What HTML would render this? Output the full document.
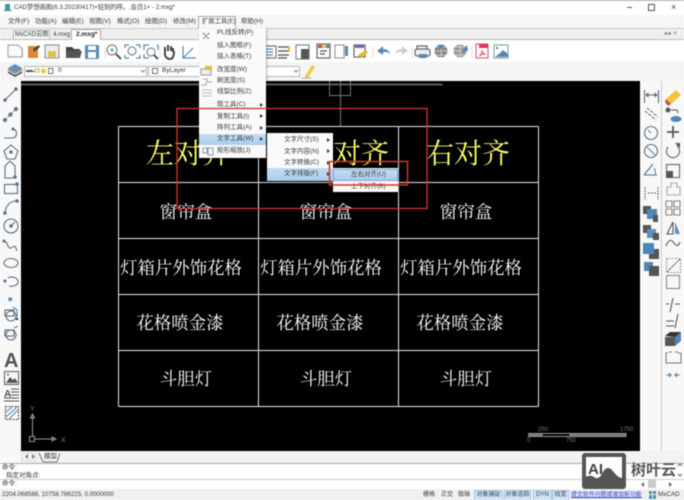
<!DOCTYPE html>
<html lang="zh"><head><meta charset="utf-8"><style>
html,body{margin:0;padding:0;width:684px;height:500px;overflow:hidden;background:#fff}
#p{position:relative;width:684px;height:500px;overflow:hidden;background:#f5f5f5;font-family:"Liberation Sans","Noto Sans CJK SC",sans-serif;color:#333;filter:blur(.5px)}
.a{position:absolute}
.t{position:absolute;white-space:nowrap;font-size:7px;line-height:10px;color:#3a3a3a}
.c{position:absolute;width:140px;text-align:center;white-space:nowrap;font-family:"Liberation Serif","Noto Serif CJK SC",serif;color:#fff;font-size:17.4px;line-height:24px}
.y{color:#ffff66;font-size:28px;line-height:40px}
.m{position:absolute;background:#fafafa;box-shadow:1px 1px 2px rgba(0,0,0,.3)}
.h{position:absolute;background:linear-gradient(#c4dcf2,#a9cdee);}
.ar{position:absolute;width:0;height:0;border-left:3px solid #333;border-top:2.5px solid transparent;border-bottom:2.5px solid transparent}
.sb{position:absolute;top:490px;height:9px;background:#cfe3f5;border:1px solid #a5c6e4;font-size:6px;line-height:9px;text-align:center;color:#345;white-space:nowrap;overflow:hidden}
</style></head><body><div id="p">
<!-- title -->
<div class="a" style="left:0;top:0;width:684px;height:15px;background:#fff;border-top:1px solid #aaa;box-sizing:border-box"></div>
<div class="t" style="left:14px;top:3px;font-size:6.3px;letter-spacing:-.05px">CAD梦想画图(6.3.20230417)+轻刻的呼。,会员1+ - 2.mxg*</div>
<div class="a" style="left:5px;top:4px;width:5px;height:7px;background:#3d9a8f"></div>
<div class="a" style="left:4px;top:10px;width:8px;height:1px;background:#3d7fb5"></div>
<div class="a" style="left:627px;top:7px;width:5px;height:1px;background:#555"></div>
<div class="a" style="left:648px;top:4px;width:5px;height:5px;border:1px solid #555"></div>
<div class="t" style="left:671px;top:2px;font-size:9px">×</div>
<!-- menubar -->
<div class="a" style="left:0;top:15px;width:684px;height:13px;background:#f6f6f6"></div>
<div class="t" style="left:8px;top:17px;font-size:6.5px">文件(F)</div>
<div class="t" style="left:35px;top:17px;font-size:6.5px">功能(A)</div>
<div class="t" style="left:62px;top:17px;font-size:6.5px">编辑(E)</div>
<div class="t" style="left:89px;top:17px;font-size:6.5px">视图(V)</div>
<div class="t" style="left:117px;top:17px;font-size:6.5px">格式(O)</div>
<div class="t" style="left:145px;top:17px;font-size:6.5px">绘图(D)</div>
<div class="t" style="left:173px;top:17px;font-size:6.5px">修改(M)</div>
<div class="a" style="left:198px;top:16px;width:38px;height:12px;background:#fafafa;border:1px solid #aaa;border-bottom:none;box-sizing:border-box"></div>
<div class="t" style="left:202px;top:17px;font-size:6.3px">扩展工具(E)</div>
<div class="t" style="left:241px;top:17px;font-size:6.5px">帮助(H)</div>
<!-- tabs -->
<div class="a" style="left:0;top:28px;width:684px;height:12px;background:#efefef;border-top:1px solid #ccc;border-bottom:1px solid #bbb;box-sizing:border-box"></div>
<div class="a" style="left:13px;top:30px;width:37px;height:10px;background:#f4f4f4;border:1px solid #bbb;box-sizing:border-box"></div>
<div class="t" style="left:15px;top:30px;font-size:6.1px">MxCAD云图</div>
<div class="t" style="left:53px;top:30px;font-size:6.3px">4.mxg</div>
<div class="a" style="left:71px;top:29px;width:30px;height:12px;background:#fff;border:1px solid #aaa;border-bottom:none;box-sizing:border-box"></div>
<div class="t" style="left:76px;top:30px;font-size:6.5px;font-weight:bold;color:#222">2.mxg*</div>
<div class="t" style="left:664px;top:29px;font-size:6px;color:#666">◂ ▸ ×</div>
<!-- toolbar bg -->
<div class="a" style="left:0;top:40px;width:684px;height:41px;background:#fff"></div>
<div class="a" style="left:0;top:62px;width:684px;height:20px;background:#f4f4f4"></div>
<!-- combos -->
<div class="a" style="left:24px;top:66px;width:123px;height:11px;background:#fff;border:1px solid #b5b5b5;box-sizing:border-box"></div>
<div class="a" style="left:148px;top:66px;width:152px;height:11px;background:#fff;border:1px solid #b5b5b5;box-sizing:border-box"></div>
<div class="t" style="left:58px;top:66px;font-size:6.5px">0</div>
<div class="t" style="left:162px;top:66px;font-size:6.5px">ByLayer</div>
<!-- side panels -->
<div class="a" style="left:0;top:81px;width:21px;height:382px;background:#f8f8f8"></div>
<div class="a" style="left:640px;top:81px;width:44px;height:382px;background:#f8f8f8"></div>
<div class="a" style="left:661px;top:81px;width:1px;height:382px;background:#ccc"></div>
<!-- canvas -->
<div class="a" style="left:21px;top:81px;width:619px;height:370px;background:#000"></div>
<!-- model tab & command -->
<div class="a" style="left:21px;top:451px;width:663px;height:12px;background:#f2f2f2"></div>
<div class="t" style="left:44px;top:452px;font-size:6.5px">模型</div>
<div class="a" style="left:0;top:463px;width:684px;height:27px;background:#fff;border-top:1px solid #aaa;box-sizing:border-box"></div>
<div class="a" style="left:0;top:479px;width:684px;height:1px;background:#ccc"></div>
<div class="t" style="left:2px;top:463px;font-size:6.5px">命令:</div>
<div class="t" style="left:6px;top:471px;font-size:6.5px">指定对角点:</div>
<div class="t" style="left:2px;top:479px;font-size:6.5px">命令:</div>
<div class="a" style="left:0;top:489px;width:684px;height:11px;background:#f0f0f0"></div>
<div class="t" style="left:2px;top:490px;font-size:6.2px">2204.068588, 10758.786225, 0.0000000</div>
<div class="t" style="left:423px;top:490px;font-size:6px">栅格</div>
<div class="t" style="left:441px;top:490px;font-size:6px">正交</div>
<div class="t" style="left:458px;top:490px;font-size:6px">极轴</div>
<div class="sb" style="left:474px;width:27px">对象捕捉</div>
<div class="sb" style="left:504px;width:25px">对象追踪</div>
<div class="sb" style="left:533px;width:17px">DYN</div>
<div class="sb" style="left:552px;width:15px">线宽</div>
<div class="t" style="left:571px;top:490px;color:#2233cc;text-decoration:underline;font-size:5.9px">提交软件问题或增加新功能</div>
<div class="t" style="left:658px;top:490px;font-size:6.3px">MxCAD</div>
<!-- table text -->
<div class="c y" style="left:118px;top:135px">左对齐</div>
<div class="c y" style="left:277px;top:135px">左对齐</div>
<div class="c y" style="left:398px;top:135px">右对齐</div>
<div class="c" style="left:116px;top:200px;font-size:17.6px">窗帘盒</div>
<div class="c" style="left:256px;top:200px;font-size:17.6px">窗帘盒</div>
<div class="c" style="left:396px;top:200px;font-size:17.6px">窗帘盒</div>
<div class="c" style="left:104px;top:256px;width:154px">灯箱片外饰花格</div>
<div class="c" style="left:244px;top:256px;width:154px">灯箱片外饰花格</div>
<div class="c" style="left:384px;top:256px;width:154px">灯箱片外饰花格</div>
<div class="c" style="left:97px;top:311px;width:166px">花格喷金漆</div>
<div class="c" style="left:237px;top:311px;width:166px">花格喷金漆</div>
<div class="c" style="left:377px;top:311px;width:166px">花格喷金漆</div>
<div class="c" style="left:116px;top:367px">斗胆灯</div>
<div class="c" style="left:256px;top:367px">斗胆灯</div>
<div class="c" style="left:396px;top:367px">斗胆灯</div>

<svg class="a" style="left:0;top:0" width="684" height="500" viewBox="0 0 684 500" fill="none">
<!-- table -->
<g stroke="#e8e8e8" stroke-width="1">
<path d="M118.5 126.5H538.5M118.5 182.500H538.500M118.500 238.500H538.500M118.500 294.500H538.500M118.500 350.500H538.500M118.500 406.500H538.500"/>
<path d="M118.500 126.500V406.500M258.500 126.500V406.500M398.500 126.500V406.500M538.500 126.500V406.500"/>
</g>
<!-- crosshair -->
<g stroke="#777" stroke-width="1"><path d="M21 84.500H442.500" stroke-width="1.500"/><path d="M329.500 81V95.500H350.500V81"/><path d="M340.500 81V126"/></g>
<!-- UCS -->
<g stroke="#999" stroke-width="1"><path d="M32.500 418V436M35 439H52"/><rect x="29.500" y="436.500" width="5" height="5"/><path d="M32.500 414l-2 4h4zM52 437v4l4-2z" fill="#666"/></g>
<text x="30" y="411" fill="#777" font-size="7" font-family="Liberation Sans">Y</text><text x="61" y="442" fill="#777" font-size="7" font-family="Liberation Sans">X</text>
<!-- scale -->
<g stroke="#aaa"><path d="M528.500 434V437M542 433V436M570 433V437M626 433V437"/><path d="M528 433.500H626M528 436.500H626" stroke="#999"/></g>
<path d="M528 434h14v2h-14zM570 434h56v2h-56z" fill="#777"/>
<g fill="#777" font-size="6" font-family="Liberation Sans"><text x="538" y="431">250</text><text x="620" y="431">1750</text><text x="527" y="442">0</text><text x="566" y="442">750</text></g>
<!-- toolbar 1 -->
<g stroke-width="1.200">
<path d="M8 45H18L22 49V57H8Z" stroke="#aaa" fill="#fafafa"/>
<path d="M28 46H38V58H28Z" fill="#d98a35"/><path d="M33 49l6-4 1 2-6 5z" fill="#444"/>
<rect x="45" y="45" width="14" height="13" stroke="#999" fill="#eee"/><rect x="48" y="51" width="8" height="6" fill="#dcc14a"/>
<path d="M66 47H72L74 49H80V58H66Z" fill="#444"/><path d="M68 51H82L80 58H66Z" fill="#555"/>
<rect x="85" y="45" width="14" height="14" rx="1" fill="#5589b5"/><rect x="88" y="46" width="8" height="4" fill="#fff"/><rect x="88" y="52" width="8" height="6" fill="#fff"/>
<circle cx="112" cy="50" r="5" stroke="#888"/><path d="M116 54l5 5" stroke="#555" stroke-width="2"/><path d="M110 50h4M112 48v4" stroke="#6a9"/>
<path d="M125 48V45H129M136 45H140V48M140 55V58H136M129 58H125V55" stroke="#5589b5"/><circle cx="132" cy="51" r="4" stroke="#888"/>
<path d="M144 50V45H149M157 45H158V50M144 54V58H149" stroke="#5589b5"/><circle cx="151" cy="52" r="4" stroke="#888"/><path d="M154 55l4 4" stroke="#555" stroke-width="2"/>
<path d="M165 52V47M168 51V45M171 51V46M173 52V48M165 52C164 56 167 59 170 59S174 56 174 51" stroke="#444" stroke-width="2"/>
<path d="M183 46V58H196M183 58L193 48" stroke="#5589b5"/>
<path d="M263 46H276V58H263Z" stroke="#777"/><path d="M266 49h7M266 52h7M266 55h7" stroke="#5589b5"/>
<path d="M278 47h10M278 51h11M278 55h11M278 58h9" stroke="#666" stroke-width="1.400"/><rect x="288" y="46" width="2" height="6" fill="#e0b93a"/>
<rect x="296" y="45" width="13" height="14" stroke="#888"/><rect x="301" y="49" width="8" height="10" fill="#555"/>
<rect x="317" y="44" width="13" height="14" stroke="#666"/><rect x="318" y="45" width="4" height="3" fill="#c44"/><rect x="322" y="45" width="4" height="3" fill="#dc3"/><rect x="326" y="45" width="4" height="3" fill="#58a"/><path d="M320 51h7M320 54h5" stroke="#555"/>
<rect x="335" y="45" width="9" height="13" stroke="#999"/>
<rect x="345" y="46" width="3" height="10" fill="#5589b5"/>
<rect x="354" y="45" width="11" height="12" stroke="#666"/><rect x="355" y="45" width="9" height="3" fill="#6a6ab5"/><path d="M358 55l8-5 2 2-6 6z" fill="#e0b93a"/>
<path d="M377 51l6-5v3c4 0 6 2 7 5-2-2-4-2-7-2v3z" fill="#5b8ab8"/>
<path d="M408 51l-6-5v3c-4 0-6 2-7 5 2-2 4-2 7-2v3z" fill="#ccc"/>
<path d="M417 46h10v4h-10z" stroke="#666"/><rect x="415" y="49" width="15" height="7" rx="2" stroke="#666" fill="#eee"/><rect x="419" y="54" width="8" height="4" fill="#5589b5"/>
<circle cx="441" cy="51" r="6.500" fill="#888"/><path d="M434.500 51h13M441 44.500v13M436 47h10M436 55h10" stroke="#ddd" stroke-width=".7"/><path d="M437 46a6 6 0 0 1 8 0l-4 3z" fill="#5589b5"/>
<circle cx="460" cy="51" r="6.500" fill="#999"/><path d="M453.500 51h13M460 44.500v13M455 47h10M455 55h10" stroke="#ddd" stroke-width=".7"/><path d="M461 52l6-7 1 6z" fill="#5589b5"/>
<rect x="476" y="44" width="12" height="14" stroke="#d86a80" fill="#fff"/><rect x="479" y="44" width="9" height="4" fill="#d8395a"/><path d="M479 56c2-1 3-4 3-6 0 3 2 4 4 4-3 0-5 1-7 2z" stroke="#d8395a" stroke-width=".8"/>
<rect x="494" y="45" width="14" height="13" stroke="#8aa" fill="#fff"/><path d="M495 57l5-4 3-3 5 4v3z" fill="#5589b5"/><circle cx="497" cy="48" r="1" fill="#555"/>
</g>
<path d="M23 46V58M105 46V58M160 46V58M373 46V58M412 46V58M472 46V58" stroke="#ddd"/>
<!-- toolbar 2 -->
<path d="M15 64l7 4-7 4-7-4z" fill="#5f8fbc"/><path d="M8 71l7 4 7-4v2l-7 4-7-4z" fill="#555"/><path d="M8 68l7 4 7-4v2l-7 4-7-4z" fill="#8a8a8a"/>
<path d="M26 70h6l3 2h-9z" fill="#555"/><rect x="35" y="69" width="4" height="3" stroke="#c8a030" stroke-width=".8"/><circle cx="43.500" cy="71" r="2.500" fill="#efc53a"/><rect x="48.500" y="68.500" width="4.500" height="5" stroke="#555" stroke-width=".8"/>
<path d="M141 70l2 2 2-2M294 70l2 2 2-2" stroke="#888"/><rect x="152.500" y="68.500" width="5" height="5" stroke="#555" stroke-width=".8"/>
<path d="M305 76l7-11 3 2-7 11-3 1z" fill="#f1c84a"/><path d="M302 78h9" stroke="#5f8fbc" stroke-dasharray="1.500 1" />
<!-- left tools -->
<g stroke="#5a6e80" stroke-width="1.100" fill="none">
<path d="M5 100L16 89"/><circle cx="5" cy="100" r="1.200" fill="#5589b5"/><circle cx="16" cy="89" r="1.200" fill="#5589b5"/>
<path d="M5 120L16 109" stroke-dasharray="2.500 1.500"/><circle cx="5" cy="120" r="1.400" fill="#5589b5"/><circle cx="10.500" cy="114.500" r="1.400" fill="#5589b5"/><circle cx="16" cy="109" r="1.400" fill="#5589b5"/>
<path d="M4 138H12C17 138 18 132 14 129"/><circle cx="13" cy="129" r="1" fill="#5589b5"/>
<path d="M11 145L18 151L15 159H7L4 151Z"/><circle cx="11" cy="152" r="1.200" fill="#5589b5"/>
<path d="M5 178V166L10 161L15 166V178Z"/><circle cx="15" cy="177" r="1.200" fill="#5589b5"/>
<rect x="4.500" y="184.500" width="13" height="9"/><circle cx="17" cy="184" r="1.200" fill="#5589b5"/>
<path d="M5 212C6 205 11 201 16 201"/><circle cx="5" cy="213" r="1.200" fill="#5589b5"/><circle cx="17" cy="201" r="1.200" fill="#5589b5"/>
<circle cx="11" cy="226" r="7"/><circle cx="11" cy="226" r="1.200" fill="#5589b5"/><path d="M11 226l4-4"/>
<path d="M4 241C8 241 7 249 11 248S14 243 17 251"/><circle cx="4" cy="241" r="1" fill="#5589b5"/>
<ellipse cx="11" cy="263" rx="7" ry="4.500"/>
<path d="M8 278C11 276 17 277 18 281S13 287 9 286"/><circle cx="5" cy="281" r="1" fill="#5589b5"/>
<rect x="8.500" y="297.500" width="3.500" height="3.500" fill="#5589b5" stroke="none"/>
<rect x="5" y="310" width="9" height="6"/><circle cx="11" cy="316" r="5"/><path d="M13 307l4 3v7" stroke="#5589b5"/><rect x="16" y="318" width="2" height="2" fill="#222" stroke="none"/>
<rect x="5" y="330" width="9" height="6"/><circle cx="11" cy="335" r="5"/><path d="M14 328l4-2" stroke="#5589b5"/>
<rect x="4.500" y="371.500" width="14" height="13" stroke="#666"/><path d="M6 383l4-6 3 3 2-2 3 5z" fill="#555" stroke="none"/><circle cx="8" cy="374.500" r="1" fill="#555" stroke="none"/>
<path d="M11 389h8M11 392h8M11 395h8M4 398h15M4 401h15" stroke="#555"/>
<rect x="5.500" y="406.500" width="13" height="13" stroke="#555" stroke-dasharray="2 1"/><path d="M6 417l11-10M9 419l9-9M6 412l6-5" stroke="#5589b5"/>
</g>
<text x="4" y="367" fill="#555" font-size="20" font-weight="bold" font-family="Liberation Sans">A</text>
<text x="4" y="397" fill="#555" font-size="10" font-weight="bold" font-family="Liberation Sans">A</text>
<!-- right tools col 1 -->
<g stroke="#5a6e80" stroke-width="1.100" fill="none">
<path d="M644.500 90V103M658.500 90V103M646 95H657" /><path d="M646 95l2-1.500v3zM657 95l-2-1.500v3z" fill="#5589b5"/>
<path d="M645 111L656 120M647 108L658 117" stroke-dasharray="3 1.500"/>
<circle cx="651" cy="133" r="6.500"/><path d="M651 133l-3-3" stroke="#5589b5"/>
<circle cx="651" cy="151" r="6.500"/><path d="M647 147l8 8" stroke="#5589b5"/>
<path d="M644 175L653 164M644 175H657"/><path d="M654 168q2 3 1 7" stroke="#5589b5"/>
<path d="M645 187V200M658 187V200M648 193H656" stroke-dasharray="2 1"/>
</g>
<g>
<rect x="643" y="206" width="8" height="8" fill="#555"/><rect x="647" y="209" width="10" height="10" fill="#4f86ba"/><rect x="653" y="215" width="5" height="7" fill="#555"/>
<rect x="643" y="225" width="8" height="8" fill="#555"/><rect x="647" y="229" width="9" height="9" fill="#5f8fbc"/><rect x="653" y="233" width="6" height="7" fill="#555"/>
<rect x="643" y="243" width="11" height="11" fill="#4f86ba"/><path d="M654 249h5v10h-10v-5h5z" fill="#555"/>
<rect x="644" y="262" width="9" height="9" fill="#4f86ba"/><rect x="649" y="266" width="10" height="10" fill="#555"/>
</g>
<!-- right tools col 2 -->
<path d="M666 99L676 90L681 95L671 104Z" fill="#efc53a"/><path d="M666 99L671 104L668 106L665 102Z" fill="#d84a3a"/>
<g stroke="#5a6e80" stroke-width="1.100" fill="none">
<circle cx="668" cy="110" r="2.500" fill="#555" stroke="none"/><path d="M671 110h6l1 3" stroke="#555"/><ellipse cx="676" cy="119" rx="5.500" ry="3" fill="#4f86ba" stroke="none"/>
<path d="M673 126V138M667 132H679" stroke="#555" stroke-width="1.800"/>
<path d="M668 147a6.500 6.500 0 1 0 9-1" stroke="#666"/><path d="M675 143h5v5z" fill="#555" stroke="none"/>
<rect x="666.500" y="164.500" width="13" height="13" stroke="#666"/><rect x="666" y="171" width="7" height="7" fill="#555" stroke="none"/>
<path d="M667 187h4v-4h6v4h3v8h-13z" stroke="#aaa"/>
<path d="M666 201h6v6h-6zM674 201h6v6h-6zM666 209h6v6h-6zM674 209h6v6h-6z" stroke="#888"/>
<path d="M673 222L667 234H673Z" stroke="#555"/><path d="M675 222L680 234H675Z" fill="#5f8fbc" stroke="none"/>
<path d="M666 246C669 238 672 240 674 243S678 247 680 242" stroke="#555"/>
<rect x="666.500" y="258.500" width="14" height="14" stroke="#999" stroke-dasharray="2 1"/><path d="M667 272L680 259" stroke="#888"/>
<rect x="666.500" y="275.500" width="13" height="13" stroke="#888"/>
<path d="M673 298l-3 14M666 304h3M675 304h5" stroke="#555"/>
<path d="M666 321h8M666 326h8M678 314l-3 14" stroke="#555"/>
</g>
<path d="M665 336l5-4h11v1l-6 4z" fill="#333"/><rect x="665" y="337" width="10" height="9" fill="#555"/><path d="M675 337l6-5v9l-6 5z" fill="#4f86ba"/>
<path d="M666 353h2M678 353h3M666 353v10h15v-10M669 352l3 0M675 352l3 0" stroke="#777"/>
<path d="M666 375h5M680 375h-5" stroke="#4f86ba"/><path d="M672 375l-3-2.500v5zM674 375l3-2.500v5z" fill="#4f86ba"/>
<!-- model tab arrows -->
<path d="M28 454l-3 2.500 3 2.500zM32 454l3 2.500-3 2.500z" fill="#777"/><path d="M39 453l4 9h14l3-9" stroke="#777"/>
<rect x="22" y="453" width="14" height="8" stroke="#ddd"/>
<!-- logo -->
<rect x="649" y="491" width="3" height="3" fill="#3d9a8f"/><rect x="653" y="491" width="3" height="3" fill="#5589b5"/><rect x="649" y="495" width="3" height="4" fill="#5589b5"/><rect x="653" y="495" width="3" height="4" fill="#3d9a8f"/>
</svg>

<!-- menu 1 -->
<div class="m" style="left:199px;top:28px;width:67px;height:130px"></div>
<div class="h" style="left:199px;top:134px;width:67px;height:11px"></div>
<div class="t" style="left:217px;top:28px;font-size:6.5px">PL线反转(P)</div>
<div class="t" style="left:217px;top:41px;font-size:6.5px">插入图框(F)</div>
<div class="t" style="left:217px;top:52px;font-size:6.5px">插入表格(T)</div>
<div class="t" style="left:217px;top:65px;font-size:6.5px">改宽度(W)</div>
<div class="t" style="left:217px;top:76px;font-size:6.5px">刷宽度(S)</div>
<div class="t" style="left:217px;top:87px;font-size:6.5px">线型比例(Z)</div>
<div class="t" style="left:217px;top:100px;font-size:6.5px">筒工具(C)</div>
<div class="t" style="left:217px;top:112px;font-size:6.5px">复制工具(I)</div>
<div class="t" style="left:217px;top:123px;font-size:6.5px">阵列工具(A)</div>
<div class="t" style="left:217px;top:134px;font-size:6.5px">文字工具(W)</div>
<div class="t" style="left:217px;top:146px;font-size:6.5px">矩形缩放(J)</div>
<div class="ar" style="left:260px;top:103px"></div><div class="ar" style="left:260px;top:114px"></div><div class="ar" style="left:260px;top:126px"></div><div class="ar" style="left:260px;top:137px"></div>
<!-- menu 2 -->
<div class="m" style="left:267px;top:133px;width:66px;height:48px"></div>
<div class="h" style="left:267px;top:168px;width:66px;height:13px"></div>
<div class="t" style="left:284px;top:135px;font-size:6.5px">文字尺寸(S)</div>
<div class="t" style="left:284px;top:147px;font-size:6.5px">文字内容(N)</div>
<div class="t" style="left:284px;top:158px;font-size:6.5px">文字转换(C)</div>
<div class="t" style="left:284px;top:169px;font-size:6.5px">文字排版(F)</div>
<div class="ar" style="left:327px;top:138px"></div><div class="ar" style="left:327px;top:149px"></div><div class="ar" style="left:327px;top:161px"></div><div class="ar" style="left:327px;top:172px"></div>
<!-- menu 3 -->
<div class="m" style="left:333px;top:168px;width:65px;height:24px"></div>
<div class="h" style="left:333px;top:169px;width:65px;height:12px;border:1px solid #7fa8cc;box-sizing:border-box"></div>
<div class="t" style="left:351px;top:170px;font-size:6.5px">左右对齐(U)</div>
<div class="t" style="left:351px;top:182px;font-size:6.5px">上下对齐(B)</div>
<!-- overlays -->
<svg class="a" style="left:0;top:0" width="684" height="500" viewBox="0 0 684 500" fill="none">
<path d="M203 33l6 6M209 33l-6 6" stroke="#555" stroke-dasharray="2 1"/><path d="M201 69h10v6h-10z" stroke="#999" fill="#eee"/><path d="M205 66h7v4h-7z" fill="#e0b93a"/>
<path d="M203 79h4v3h5M201 85h5v-3" stroke="#aaa"/><path d="M202 90h10M202 93h10M202 96h10" stroke="#bbb"/>
<path d="M203 148h4v5h-4zM208 148h5v7h-5z" stroke="#8a9aaa"/>
<rect x="177" y="108.500" width="250" height="100" stroke="#d8322c" stroke-width="1.300"/>
<rect x="329.500" y="161.500" width="78" height="23.500" stroke="#d8322c" stroke-width="1.500"/>
<!-- watermark -->
<rect x="582" y="453" width="44" height="36" rx="3" fill="#555"/>
<rect x="586" y="457" width="36" height="28" fill="#fff"/>
<path d="M586 485V477C592 473 594 479 598 478C602 477 603 468 608 468C613 468 615 477 622 478V485Z" fill="#555"/>
<text x="588" y="474" fill="#444" font-size="15" font-weight="bold" font-family="Liberation Sans">AI</text>
<rect x="648" y="480" width="8" height="8" fill="#ccc"/>
<path d="M644 482l-3 2.500 3 2.500zM669 482l3 2.500-3 2.500z" fill="#666"/>
<path d="M678 466l2-2 2 2M678 474l2 2 2-2" stroke="#666"/>
</svg>
<div class="t" style="left:631px;top:462px;font-size:15px;line-height:18px;font-weight:bold;color:#555">树叶云</div>
</div></body></html>
